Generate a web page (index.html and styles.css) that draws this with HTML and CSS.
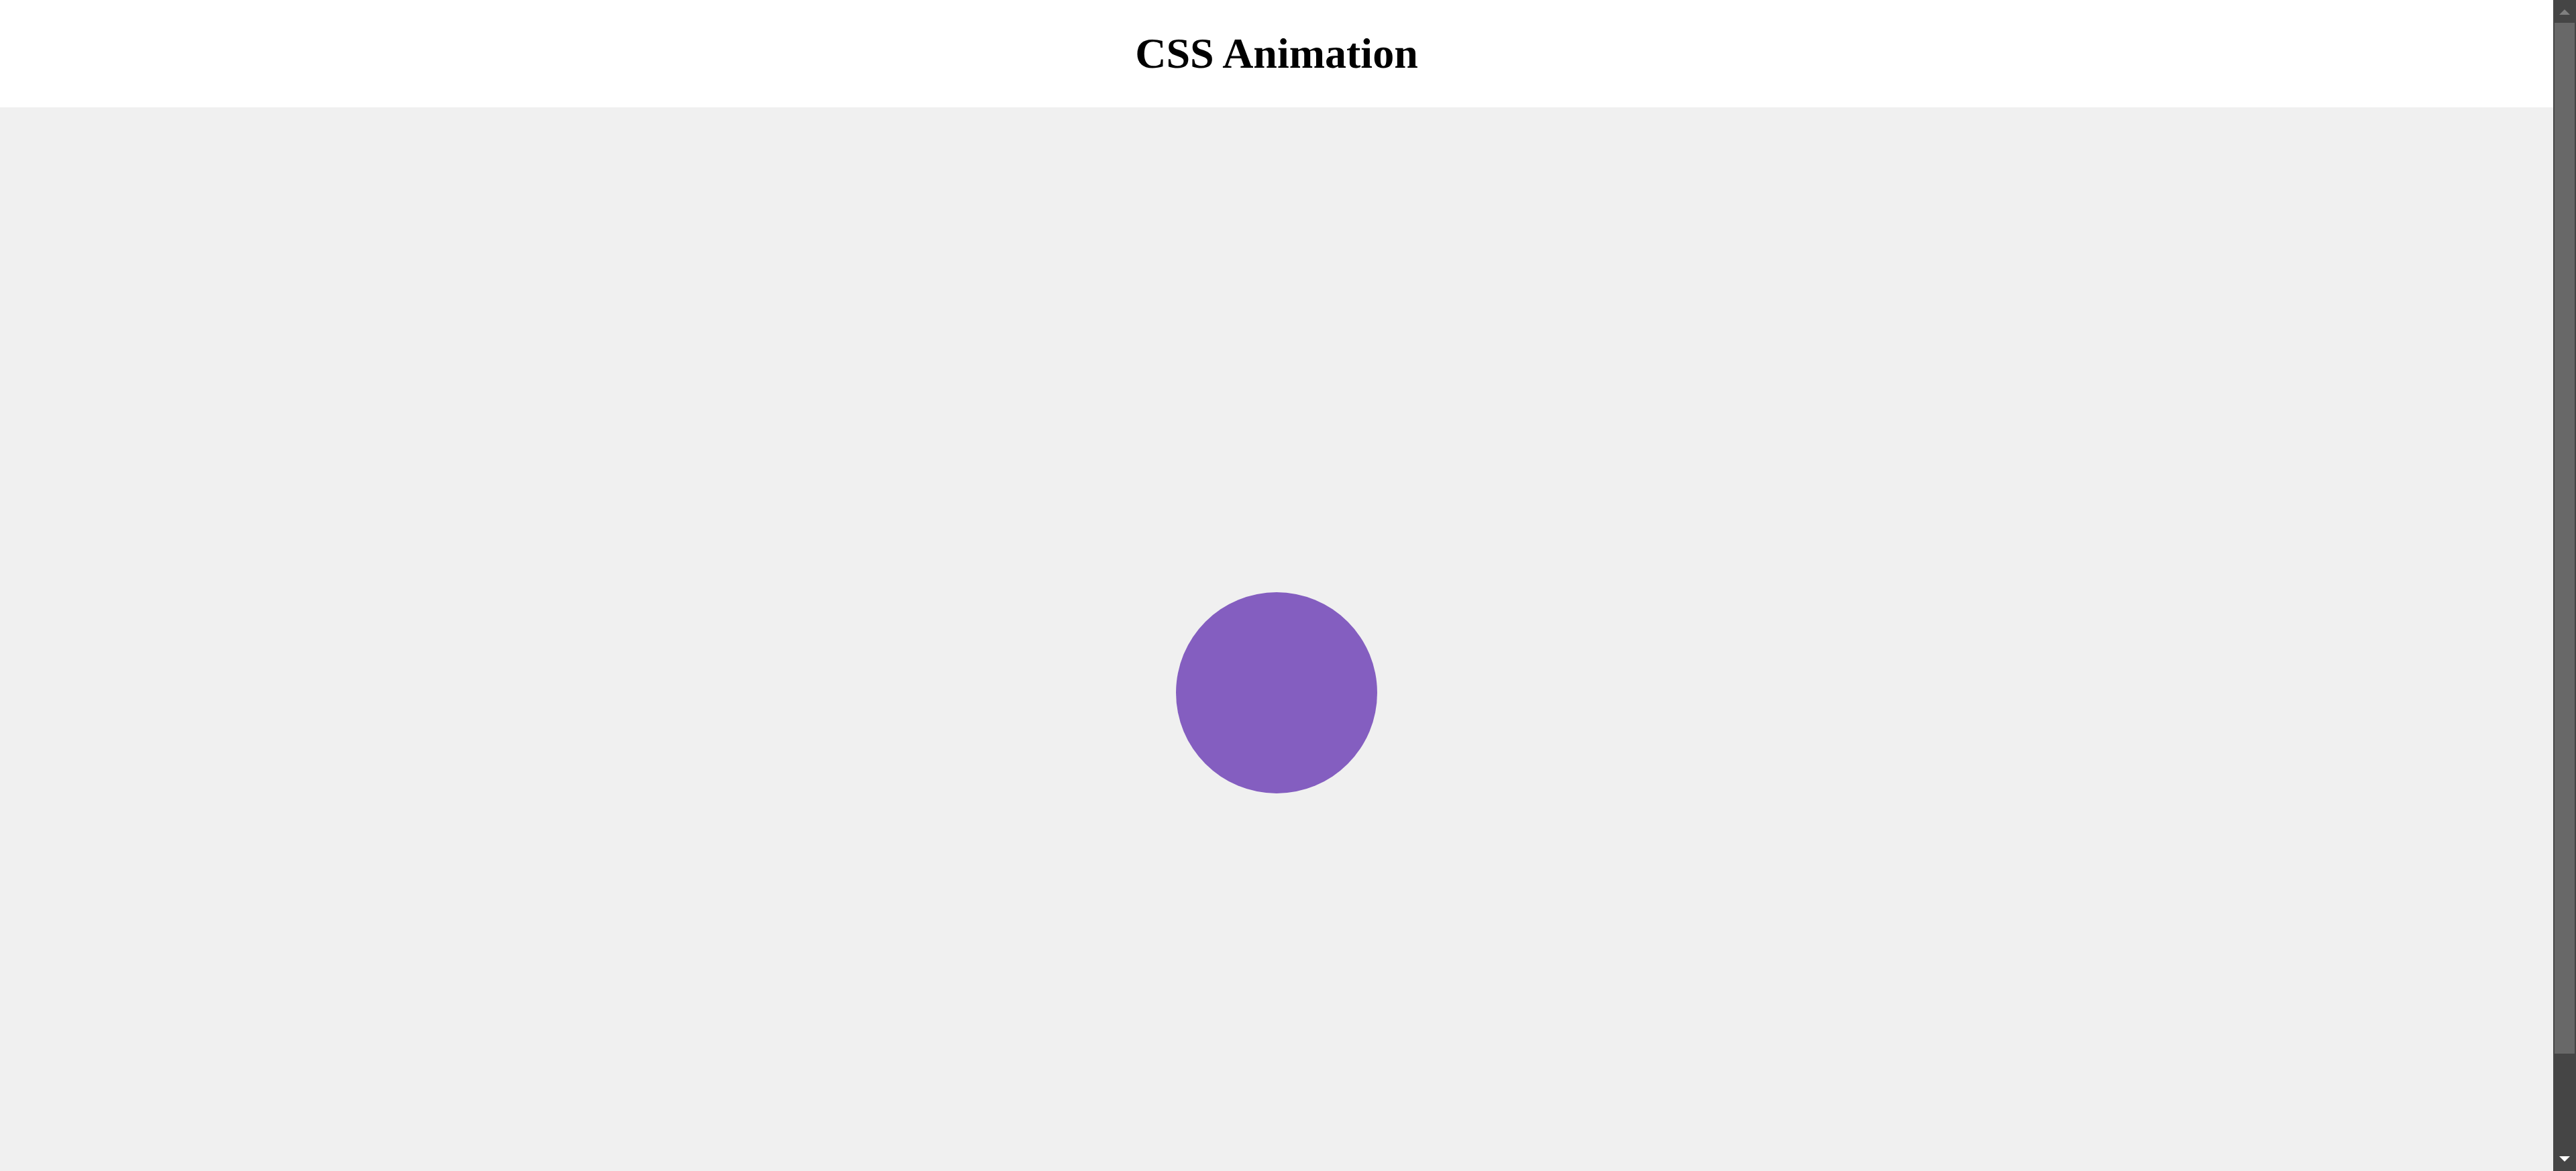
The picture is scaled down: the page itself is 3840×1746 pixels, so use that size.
FILE: index.html
```html
<!DOCTYPE html>
<html lang="en">
<head>
<meta charset="utf-8">
<title>CSS Animation</title>
<link rel="stylesheet" href="styles.css">
</head>
<body>
<div class="viewport">
  <div class="page">
    <header class="site-header">
      <h1 class="title">CSS Animation</h1>
    </header>
    <main class="stage">
      <div class="ball"></div>
    </main>
  </div>
  <div class="scrollbar" aria-hidden="true">
    <div class="sb-button sb-up"><span class="arrow arrow-up"></span></div>
    <div class="sb-thumb"></div>
    <div class="sb-track"></div>
    <div class="sb-button sb-down"><span class="arrow arrow-down"></span></div>
  </div>
</div>
</body>
</html>
```
FILE: styles.css
```css
html, body {
  margin: 0;
  padding: 0;
  overflow: hidden;
}
body {
  background: #f0f0f0;
  font-family: "Liberation Serif", "Times New Roman", serif;
}
.viewport {
  display: flex;
  height: 100vh;
  overflow: hidden;
}
.page {
  flex: 1;
  min-width: 0;
  overflow: hidden;
}
.site-header {
  height: 160px;
  background: #ffffff;
  display: flex;
  align-items: center;
  justify-content: center;
}
.title {
  margin: 0;
  font-size: 64px;
  font-weight: bold;
  line-height: normal;
  color: #000;
}
.stage {
  height: 1746px;
  display: flex;
  align-items: center;
  justify-content: center;
  background: #f0f0f0;
}
.ball {
  width: 300px;
  height: 300px;
  border-radius: 50%;
  background: #845ec0;
}

.scrollbar {
  width: 34px;
  flex: 0 0 34px;
  display: flex;
  flex-direction: column;
  background: #454545;
}
.sb-button {
  height: 34px;
  flex: 0 0 34px;
  display: flex;
  justify-content: center;
}
.sb-up {
  align-items: flex-start;
  padding-top: 14px;
  box-sizing: border-box;
}
.sb-down {
  align-items: flex-start;
  padding-top: 12px;
  box-sizing: border-box;
}
.arrow {
  width: 0;
  height: 0;
  border-left: 8px solid transparent;
  border-right: 8px solid transparent;
}
.arrow-up {
  border-bottom: 8px solid #808080;
}
.arrow-down {
  border-top: 8px solid #ffffff;
}
.sb-thumb {
  flex: 0 0 1537px;
  margin: 0 2px;
  background: #686868;
}
.sb-track {
  flex: 1;
}
```
